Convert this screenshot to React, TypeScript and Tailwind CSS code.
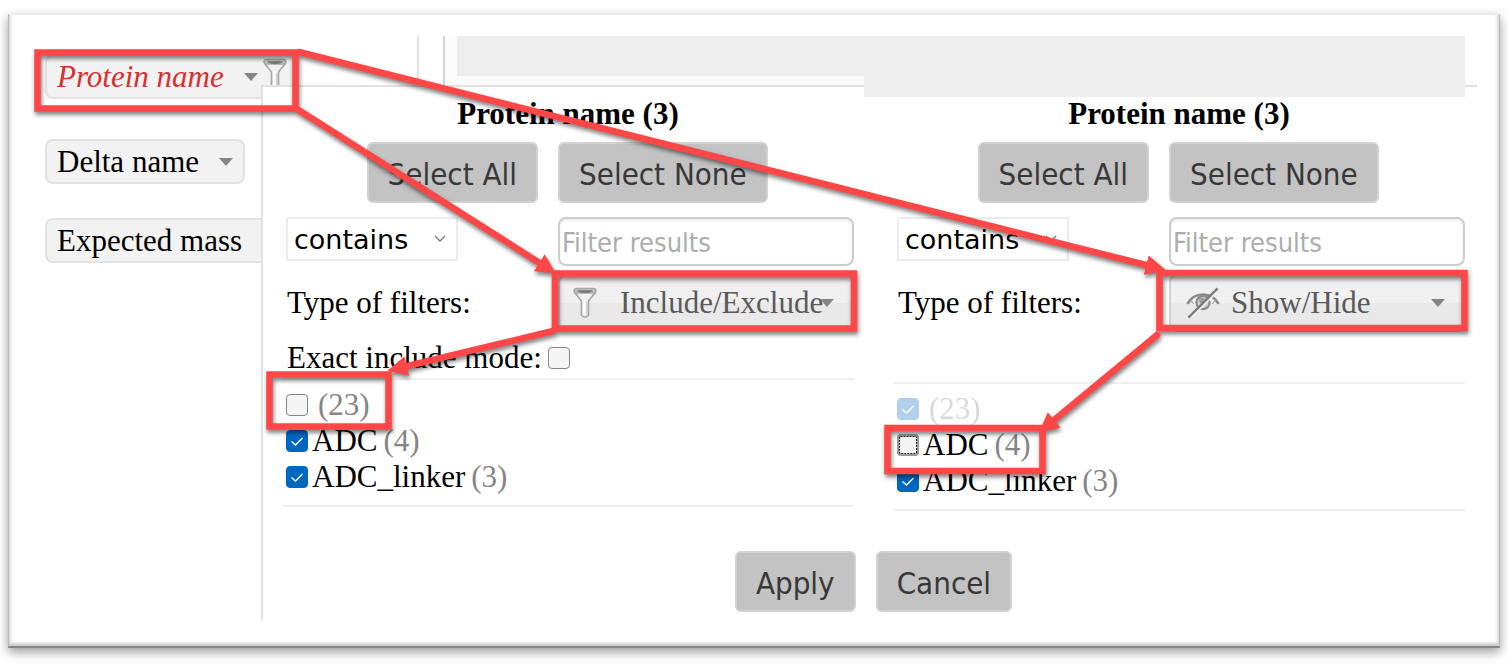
import React, { useState } from 'react';
import { clsx } from 'clsx';

interface Item {
  name: string;
  count: number;
  checked: boolean;
  disabled?: boolean;
  focused?: boolean;
}

interface FilterPanelProps {
  id: string;
  type: 'include' | 'show';
  items: Item[];
}

const serif = 'font-["Liberation_Serif",serif]';
const sans = 'font-["DejaVu_Sans_Condensed","Noto_Sans",sans-serif]';

const Funnel: React.FC<{ className?: string }> = ({ className }) => (
  <svg viewBox="0 0 26 34" className={className} aria-hidden="true">
    <path d="M1.500 4.500 C2 7 8 12 9.300 15.500 V30 Q13 34 16.700 30 V15.500 C18 12 24 7 24.500 4.500 Z" fill="#f2f2f2" stroke="#a8a8a8" strokeWidth="1.800" />
    <path d="M12 14 V30" stroke="#ffffff" strokeWidth="2.500" />
    <path d="M15 16 V30" stroke="#cccccc" strokeWidth="1.500" />
    <rect x="1.500" y="1.500" width="23" height="5" rx="2.500" fill="#c4c4c4" stroke="#a8a8a8" strokeWidth="1.600" />
    <path d="M5 4 Q13 8 21 4 Z" fill="#6f6f6f" stroke="#7d7d7d" strokeWidth="1.200" />
  </svg>
);

const EyeOff: React.FC<{ className?: string }> = ({ className }) => (
  <svg viewBox="0 0 36 34" className={className} fill="none" stroke="#8a8a8a" aria-hidden="true">
    <path d="M1.500 18 C6 10 11 8 18 8 C25 8 30 10 34.500 18" strokeWidth="2.800" />
    <path d="M5 14 L8 18 M31 14 L28 18" stroke="#b0b0b0" strokeWidth="1.500" />
    <circle cx="18" cy="16.500" r="7" fill="#d0d0d0" strokeWidth="2.400" />
    <circle cx="17" cy="14.500" r="3" fill="#9a9a9a" stroke="none" />
    <path d="M5 33 L35.500 2.500" stroke="#f2f2f2" strokeWidth="1.800" />
    <path d="M2.500 32.500 L33.500 1.500" stroke="#7d7d7d" strokeWidth="2.500" />
  </svg>
);

const Arrow: React.FC<{ className?: string }> = ({ className }) => (
  <svg viewBox="0 0 14 8" className={clsx('h-2 w-3.5 shrink-0', className)} aria-hidden="true">
    <path d="M0 0 H14 L7 8 Z" fill="#858585" />
  </svg>
);

const Checkbox: React.FC<{ id: string; item: Omit<Item, 'name' | 'count'> }> = ({ id, item }) => {
  const [checked, setChecked] = useState(item.checked);
  return (
    <span className="relative block size-[22px] shrink-0">
      <input
        id={id}
        type="checkbox"
        checked={checked}
        disabled={item.disabled}
        onChange={(e) => setChecked(e.target.checked)}
        className="block size-[22px] appearance-none rounded border border-[#858585] bg-[#f5f5f5] checked:border-[#0067c0] checked:bg-[#0067c0]"
      />
      {checked && (
        <svg viewBox="0 0 22 22" className="pointer-events-none absolute inset-0" fill="none" stroke="#ffffff" strokeWidth="1.300">
          <path d="M5.500 11.500 L9.500 15 L16.500 8" />
        </svg>
      )}
      {item.focused && (
        <svg viewBox="0 0 22 22" className="pointer-events-none absolute inset-0" fill="none">
          <rect x="1" y="1" width="20" height="20" rx="3" stroke="#9b9b9b" strokeWidth="2" />
          <rect x="2.500" y="2.500" width="17" height="17" rx="1" stroke="#222222" strokeWidth="1.200" strokeDasharray="2 1" />
        </svg>
      )}
    </span>
  );
};

const PushButton: React.FC<{ children: React.ReactNode }> = ({ children }) => (
  <button type="button" className={clsx(sans, 'h-[61px] rounded-md border-2 border-[#d2d2d2] bg-[#c3c3c3] px-[19px] pt-0.5 text-[31px] leading-9 text-[#383838]')}>
    {children}
  </button>
);

const FilterPanel: React.FC<FilterPanelProps> = ({ id, type, items }) => (
  <section className="min-w-0 flex-1">
    <h2 className="text-center text-[31px] leading-9 font-bold">Protein name (3)</h2>
    <div className="mt-2.5 grid grid-cols-[276fr_296fr]">
      <div className="flex justify-end pr-5">
        <PushButton>Select All</PushButton>
      </div>
      <div>
        <PushButton>Select None</PushButton>
      </div>
    </div>
    <div className="mt-3.5 grid grid-cols-[276fr_296fr] items-start">
      <div className="relative ml-1 w-[172px]">
        <select aria-label="Match" className='block h-11 w-full appearance-none border-2 border-[#ececec] bg-white pt-0.5 pl-1.5 font-["DejaVu_Sans",sans-serif] text-[27px] leading-9'>
          <option>contains</option>
        </select>
        <svg viewBox="0 0 12 8" className="pointer-events-none absolute top-[18px] right-3 h-2 w-3" fill="none" stroke="#777777">
          <path d="M1 1 L6 6 L11 1" strokeWidth="1.300" />
        </svg>
      </div>
      <input
        type="text"
        aria-label="Filter results"
        placeholder="Filter results"
        className={clsx(sans, 'h-[49px] w-full rounded-lg border-2 border-[#cdcdcd] bg-white px-0.5 pt-0.5 text-[27px] leading-9 shadow-[inset_0_2px_3px_#eeeeee] placeholder:text-[#adadad]')}
      />
    </div>
    <div className="mt-2 grid grid-cols-[276fr_296fr] items-center">
      <label htmlFor={id + '-type'} className="pl-[5px] text-[31px] leading-9">
        Type of filters:
      </label>
      <div className="relative">
        <select
          id={id + '-type'}
          className={clsx(serif, 'block h-[58px] w-full appearance-none rounded-lg border-2 border-[#d0d0d0] bg-linear-to-b from-[#f0f0f0] from-50% to-[#e9e9e9] to-50% pl-[60px] text-[31px] leading-9 text-[#5a5a5a]')}
        >
          <option>{type === 'include' ? 'Include/Exclude' : 'Show/Hide'}</option>
        </select>
        {type === 'include' ? (
          <Funnel className="pointer-events-none absolute top-[13px] left-3.5 h-8 w-[26px]" />
        ) : (
          <EyeOff className="pointer-events-none absolute top-[13px] left-4 h-8 w-9" />
        )}
        <Arrow className="pointer-events-none absolute top-[25px] right-5" />
      </div>
    </div>
    {type === 'include' ? (
      <div className="mt-1.5 flex h-10 items-center pl-[5px]">
        <label htmlFor={id + '-exact'} className="text-[31px] leading-9">
          Exact include mode:
        </label>
        <span className="ml-1.5">
          <Checkbox id={id + '-exact'} item={{ checked: false }} />
        </span>
      </div>
    ) : (
      <div className="h-[50px]" />
    )}
    <ul className="border-y-2 border-[#f0f0f0] pt-[7px] pb-2.5">
      {items.map((item, i) => (
        <li key={item.name} className={clsx('flex h-9 items-center pl-1', item.disabled && 'opacity-30')}>
          <Checkbox id={id + '-item-' + i} item={item} />
          <label htmlFor={id + '-item-' + i} className="flex gap-1.5 pl-1 text-[31px] leading-9">
            <span>{item.name}</span>
            <span className="text-[#858585]">({item.count})</span>
          </label>
        </li>
      ))}
    </ul>
  </section>
);

const Annotations: React.FC = () => (
  <svg
    viewBox="0 0 1508 665"
    preserveAspectRatio="none"
    className="pointer-events-none absolute inset-0 z-20 h-full w-full drop-shadow-[1px_3px_2px_rgba(0,0,0,0.5)]"
    fill="none"
    stroke="#ff4747"
    aria-hidden="true"
  >
    <defs>
      <marker id="head" viewBox="0 0 20 20" refX="8" refY="10" markerWidth="20" markerHeight="20" markerUnits="userSpaceOnUse" orient="auto">
        <path d="M0 0 L20 10 L0 20 Z" fill="#ff4747" stroke="none" />
      </marker>
    </defs>
    <g strokeWidth="6.500">
      <rect x="37.500" y="52.500" width="258" height="56" />
      <rect x="555" y="273.500" width="299" height="55" />
      <rect x="1159.500" y="273" width="305" height="55" />
      <rect x="269.500" y="374.500" width="119" height="52" />
      <rect x="887.500" y="428" width="155" height="43" />
    </g>
    <g strokeWidth="6.500" strokeLinecap="round">
      <path d="M299 52 L1154 267" markerEnd="url(#head)" />
      <path d="M297 109 L546 267" markerEnd="url(#head)" />
      <path d="M553 331 L399 368" markerEnd="url(#head)" />
      <path d="M1157 335 L1048 425" markerEnd="url(#head)" />
    </g>
  </svg>
);

const pill = 'flex h-[45px] items-center rounded-lg border-2 border-[#e2e2e2] bg-[#f2f2f2] pl-2.5 text-[31px] leading-9 whitespace-nowrap';

export default function App() {
  return (
    <div className={clsx(serif, 'relative bg-white pt-3.5 pr-2 pb-[17px] pl-2 text-black')}>
      <main className="flex border-x border-t border-b-2 border-x-[#b8b8b8] border-t-[#ececec] border-b-[#858585] bg-white pt-[21px] pr-[22px] pb-[26px] shadow-[0_4px_10px_rgba(0,0,0,0.4),inset_0_-4px_3px_-1px_#cccccc,inset_4px_0_3px_-2px_#dddddd,inset_-4px_0_3px_-2px_#dddddd]">
        <nav className="w-[252px] shrink-0 pt-[18px] pl-9">
          <button type="button" className={clsx(pill, 'w-[253px] text-[#d92f2f] italic')}>
            Protein name
            <Arrow className="ml-5" />
            <Funnel className="mt-0.5 ml-1 h-8 w-[26px] shrink-0 self-start" />
          </button>
          <button type="button" className={clsx(pill, 'mt-10 pr-2.5')}>
            Delta name
            <Arrow className="ml-5" />
          </button>
          <button type="button" className={clsx(pill, 'mt-[34px] w-[253px]')}>
            Expected mass
          </button>
        </nav>

        <div className="relative z-10 min-w-0 flex-1">
          <div className="flex h-[49px] pr-3">
            <div className="w-[158px] border-r-2 border-[#e2e2e2]" />
            <div className="w-[26px] border-r-2 border-[#d4d4d4]" />
            <div className="flex-1 bg-[#fbfbfb] pl-3">
              <div className="h-10 bg-[#eeeeee]" />
            </div>
          </div>
          <div className="relative border-t-2 border-l-2 border-[#e2e2e2] bg-white pt-[9px] pr-3 pb-2 pl-[19px]">
            <div className="absolute -top-3 right-3 h-[22px] w-[601px] bg-[#eeeeee]" />
            <div className="flex gap-[39px]">
              <FilterPanel
                id="include"
                type="include"
                items={[
                  { name: '', count: 23, checked: false },
                  { name: 'ADC', count: 4, checked: true },
                  { name: 'ADC_linker', count: 3, checked: true },
                ]}
              />
              <FilterPanel
                id="show"
                type="show"
                items={[
                  { name: '', count: 23, checked: true, disabled: true },
                  { name: 'ADC', count: 4, checked: false, focused: true },
                  { name: 'ADC_linker', count: 3, checked: true },
                ]}
              />
            </div>
            <div className="mt-10 flex justify-center gap-5">
              <PushButton>Apply</PushButton>
              <PushButton>Cancel</PushButton>
            </div>
          </div>
        </div>
      </main>
      <Annotations />
    </div>
  );
}
